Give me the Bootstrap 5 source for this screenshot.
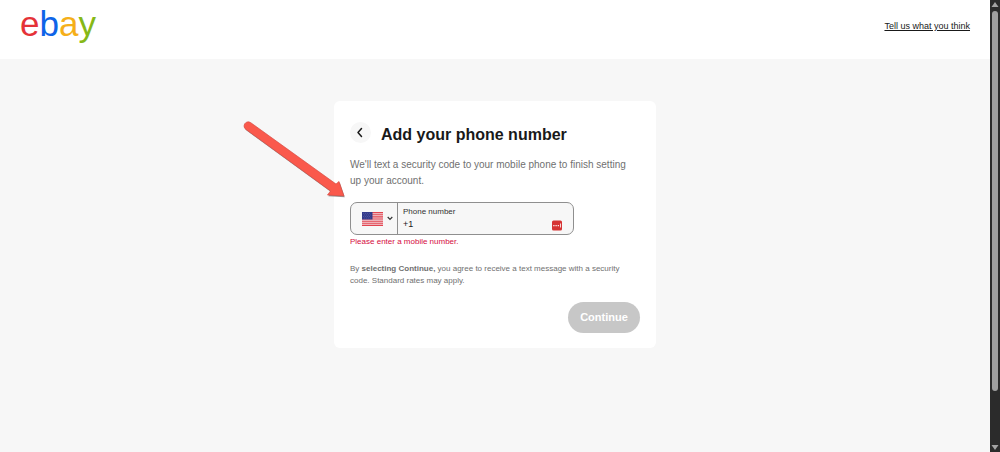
<!DOCTYPE html>
<html lang="en">
<head>
<meta charset="utf-8">
<meta name="viewport" content="width=device-width, initial-scale=1">
<title>Add your phone number</title>
<link href="https://cdn.jsdelivr.net/npm/bootstrap@5.3.0/dist/css/bootstrap.min.css" rel="stylesheet">
<style>
body{font-family:"Liberation Sans",Arial,sans-serif;background:#f7f7f7;color:#191919;overflow:hidden}
.site-header{height:59px;padding:0 20px}
.brand{font-size:35px;line-height:40px;padding-top:4px}
.r{color:#e53238}.b{color:#0f64e8}.y{color:#f5af1a}.g{color:#86b817}
.feedback{font-size:9px;line-height:12px;color:#191919;padding-top:20px}
.panel{width:322px;margin-top:42px;padding:21px 16px 15px;border-radius:6px}
.heading{gap:10px}
.title{font-size:16px;line-height:20px;padding-top:3px}
.back{width:21px;height:21px;background:#f7f7f7}
.intro{font-size:10px;line-height:16px;color:#707070;margin-top:12px}
.field{width:224px;height:33px;border:1px solid #8f8f8f;border-radius:7px;background:#f7f7f7;margin-top:13px}
.country{width:47px;border-right:1px solid #8f8f8f}
.country select{opacity:0;cursor:pointer}
.entry{padding:3px 11px 3px 5px}
.entry label{font-size:8px;line-height:11px;color:#333}
.entry input{font-size:9px;line-height:14px;outline:0;color:#191919}
.error{font-size:8px;line-height:12px;color:#d50b3e;padding-top:1px}
.terms{font-size:8px;line-height:12px;color:#707070;margin-top:15px}
.go{width:72px;height:31px;font-size:11px;background:#c7c7c7;color:#fff;margin-top:15px}
.pointer{left:-94px;top:18px}
.rail{width:10px;background:#2b2b2b}
.thumb{width:6px;height:84%;border-radius:3px;background:#9f9f9f}
</style>
</head>
<body>
<div class="d-flex vh-100">
  <div class="flex-grow-1">
    <header class="site-header bg-white d-flex justify-content-between">
      <a href="#" class="brand text-decoration-none" aria-label="ebay"><span class="r">e</span><span class="b">b</span><span class="y">a</span><span class="g">y</span></a>
      <a href="#" class="feedback">Tell us what you think</a>
    </header>
    <main>
      <form class="panel bg-white mx-auto position-relative">
        <div class="heading d-flex align-items-start">
          <button type="button" class="back border-0 rounded-circle p-0 d-flex align-items-center justify-content-center flex-shrink-0" aria-label="Back">
            <svg width="9" height="11" viewBox="0 0 9 11" fill="none" stroke="#191919" stroke-width="1.5" stroke-linecap="round" stroke-linejoin="round"><path d="M5.5 1.5 2 5.5l3.500 4"/></svg>
          </button>
          <h1 class="title fw-bold m-0">Add your phone number</h1>
        </div>
        <p class="intro mb-0 pe-2">We'll text a security code to your mobile phone to finish setting up your account.</p>
        <div class="field d-flex">
          <div class="country position-relative d-flex align-items-center justify-content-end gap-1 pe-1 flex-shrink-0">
            <svg width="21" height="14" viewBox="0 0 20 14" preserveAspectRatio="none"><path fill="#f2d5da" d="M0 0h20v14H0z"/><path stroke="#e2444f" stroke-width="1.1" d="M0 .6h20M0 2.700h20M0 4.900h20M0 7h20M0 9.200h20M0 11.300h20M0 13.400h20"/><path fill="#343b8b" d="M0 0h10v7.500H0z"/><path stroke="#7177b2" stroke-width=".6" stroke-dasharray=".6 1.400" d="M1 1.500h8M2 3h7M1 4.500h8M2 6h7"/></svg>
            <svg width="6" height="5" viewBox="0 0 6 5" fill="none" stroke="#333" stroke-width="1.200"><path d="m.7 1 2.300 2.300L5.300 1"/></svg>
            <select class="position-absolute top-0 start-0 w-100 h-100" aria-label="Country code"><option>United States +1</option></select>
          </div>
          <div class="entry d-flex flex-grow-1">
            <div class="d-flex flex-column flex-grow-1">
              <label for="phone">Phone number</label>
              <input id="phone" type="tel" value="+1" class="border-0 bg-transparent p-0 w-100">
            </div>
            <svg class="align-self-end flex-shrink-0" width="10" height="11" viewBox="0 0 10 11"><rect y=".5" width="10" height="10" rx="1.500" fill="#d63333"/><path fill="#fff" d="M1.300 5h1.200v1.200H1.300zM3.500 5h1.200v1.200H3.500zM5.700 5h1.200v1.200H5.700zM8 3.500h.8v4H8z"/></svg>
          </div>
        </div>
        <div class="error">Please enter a mobile number.</div>
        <p class="terms mb-0">By <b>selecting Continue,</b> you agree to receive a text message with a security code. Standard rates may apply.</p>
        <div class="d-flex justify-content-end"><button type="submit" class="go border-0 rounded-pill fw-bold p-0" disabled>Continue</button></div>
        <svg class="pointer position-absolute" width="108" height="84" viewBox="0 0 108 84" aria-hidden="true">
          <path transform="translate(.8 1.200)" fill="#555" opacity=".6" d="M10.500 3.500 96 65l3-2.500L104 77l-16.500-1 3-4L6 10.500a4 4 0 0 1 4.500-7z"/>
          <path fill="#fa594c" stroke="#d74c43" stroke-width=".7" d="M10.500 3.500 96 65l3-2.500L104 77l-16.500-1 3-4L6 10.500a4 4 0 0 1 4.500-7z"/>
        </svg>
      </form>
    </main>
  </div>
  <div class="rail d-flex flex-column align-items-center flex-shrink-0" aria-hidden="true">
    <svg width="10" height="11" viewBox="0 0 10 11"><path fill="#a3a3a3" d="m5 2 3.500 5h-7z"/></svg>
    <div class="thumb"></div>
    <svg class="mt-auto" width="10" height="11" viewBox="0 0 10 11"><path fill="#a3a3a3" d="m5 9 3.500-5h-7z"/></svg>
  </div>
</div>
<script src="https://cdn.jsdelivr.net/npm/bootstrap@5.3.0/dist/js/bootstrap.bundle.min.js"></script>
</body>
</html>
